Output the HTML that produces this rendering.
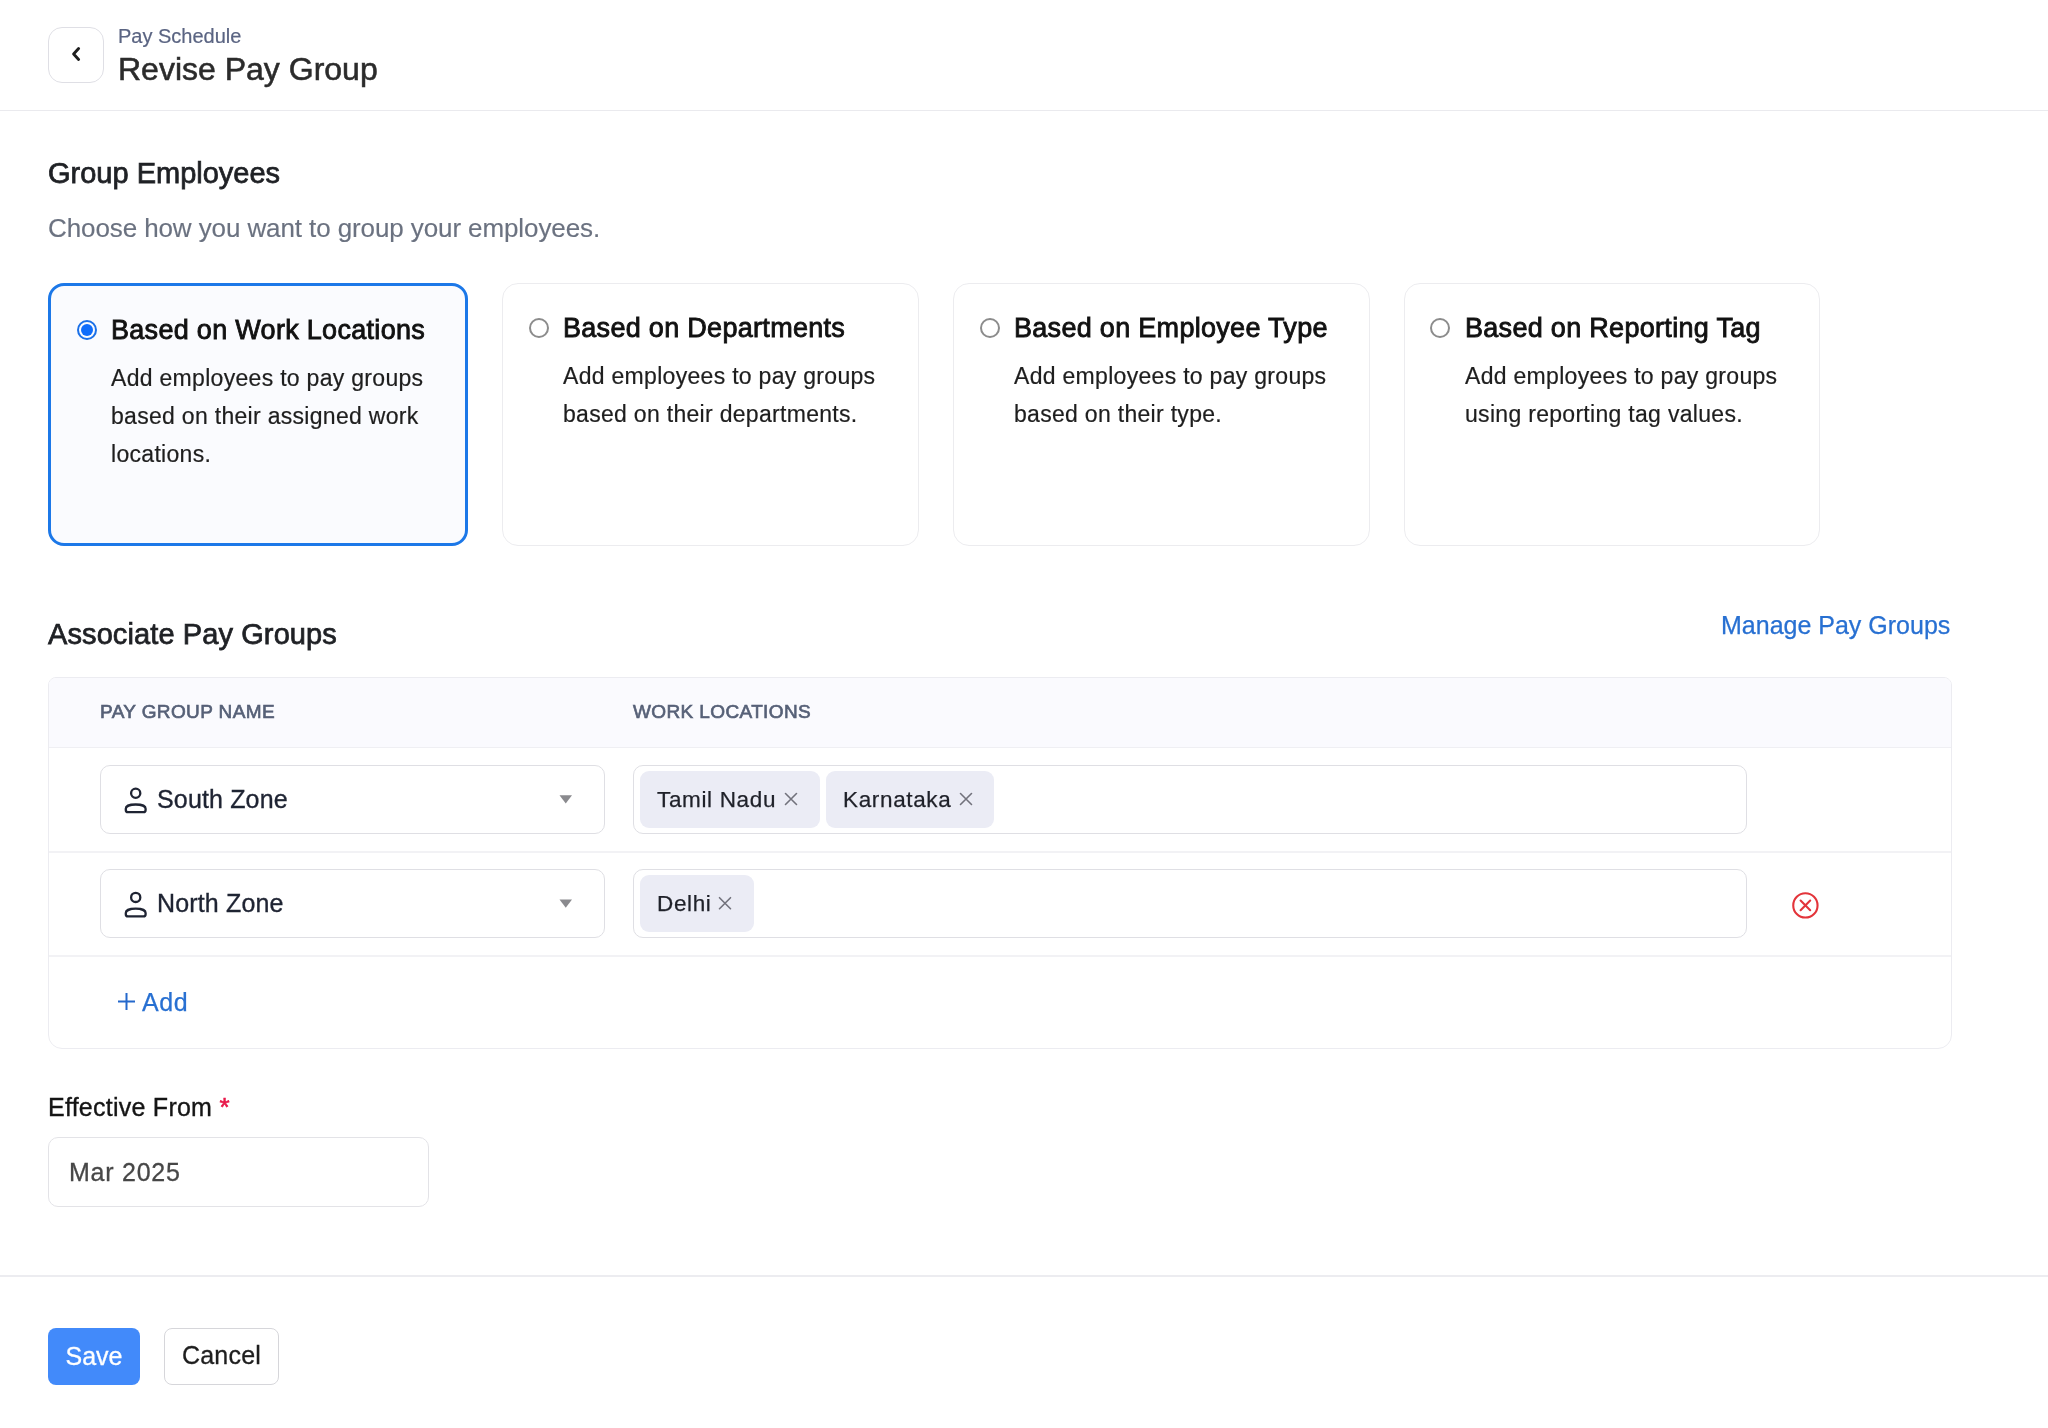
<!DOCTYPE html>
<html><head><meta charset="utf-8">
<style>
*{box-sizing:border-box;margin:0;padding:0}
html,body{width:2048px;height:1428px;overflow:hidden;background:#fff;font-family:"Liberation Sans",sans-serif;color:#222}
.abs{position:absolute}
.back{left:48px;top:27px;width:56px;height:56px;border:1.5px solid #dfdfe5;border-radius:14px;background:#fff}
.crumb{left:118px;top:25px;font-size:20px;color:#5a6482;white-space:nowrap;-webkit-text-stroke:0.2px #5a6482}
.title{left:118px;top:51px;font-size:32px;color:#2b2b2b;white-space:nowrap;-webkit-text-stroke:0.55px #2b2b2b}
.hline{left:0;top:109.5px;width:2048px;height:1.5px;background:#eaeaee}
.h2{font-size:29px;color:#1f2125;white-space:nowrap;-webkit-text-stroke:0.75px #1f2125}
.sub{left:48px;top:213px;font-size:26px;letter-spacing:-0.1px;color:#6b7280;white-space:nowrap;-webkit-text-stroke:0.15px #6b7280}
.card{top:283px;height:263px;border:1.5px solid #ececef;border-radius:16px;background:#fff}
.card.sel{border:3px solid #1c78e8;background:#fafbfe}
.radio{width:20px;height:20px;border:2px solid #8c8c8c;border-radius:50%}
.radio.on{border:2px solid #1a70e8}
.radio.on::after{content:"";position:absolute;left:2px;top:2px;width:12px;height:12px;border-radius:50%;background:#0f6dfb}
.ctitle{font-size:27px;letter-spacing:0.3px;color:#111;white-space:nowrap;-webkit-text-stroke:0.85px #111}
.cdesc{font-size:23px;line-height:38px;color:#1e1e1e;letter-spacing:0.3px;-webkit-text-stroke:0.2px #1e1e1e}

.link{color:#2870d2;-webkit-text-stroke:0.25px #2870d2}
.table{left:48px;top:677px;width:1904px;height:372px;border:1.5px solid #ececf1;border-radius:8px 8px 14px 14px;background:#fff;overflow:hidden}
.thead{left:0;top:0;width:100%;height:69.5px;background:#fafafe;border-bottom:1.5px solid #efeff3}
.th{font-size:19px;color:#566077;letter-spacing:0.38px;white-space:nowrap;-webkit-text-stroke:0.65px #566077}
.rowline{left:0;width:100%;height:1.5px;background:#f2f2f5}
.sel-box{width:505px;height:69px;border:1.5px solid #dfdfe4;border-radius:10px;background:#fff}
.sel-text{font-size:25px;color:#1f2433;white-space:nowrap;letter-spacing:0.15px;-webkit-text-stroke:0.35px #1f2433}
.tagbox{width:1114px;height:69px;border:1.5px solid #dfdfe4;border-radius:10px;background:#fff}
.tag{height:57px;background:#ebecf5;border-radius:9px}
.tagtext{font-size:22.5px;color:#1f2129;white-space:nowrap;letter-spacing:0.65px;-webkit-text-stroke:0.25px #1f2129}
.lbl{font-size:25px;color:#151515;white-space:nowrap;letter-spacing:0.25px;-webkit-text-stroke:0.35px #151515}
.ast{color:#e8194a;font-size:26px;-webkit-text-stroke:0.6px #e8194a}
.inp{left:48px;top:1137px;width:381px;height:70px;border:1.5px solid #e3e3e7;border-radius:10px;background:#fff}
.fline{left:0;top:1275px;width:2048px;height:2px;background:#ececf0}
.btn-save{left:48px;top:1328px;width:92px;height:57px;background:#428afa;border-radius:8px;color:#fff;font-size:25px;text-align:center;line-height:57px;-webkit-text-stroke:0.3px #fff}
.btn-cancel{left:164px;top:1328px;width:115px;height:57px;border:1.5px solid #d6d6da;border-radius:8px;color:#1e1e1e;font-size:25px;letter-spacing:0.2px;-webkit-text-stroke:0.3px #1e1e1e;text-align:center;line-height:52px;background:#fff}
</style></head><body><div id="root" style="position:absolute;left:0;top:0;width:2048px;height:1428px;will-change:transform">
<div class="abs back"><svg width="56" height="56" viewBox="0 0 56 56" style="position:absolute;left:-1.5px;top:-1.5px"><path d="M78.6 48.6 L73.6 54 L78.6 59.4" transform="translate(-48,-27)" fill="none" stroke="#1e1e1e" stroke-width="2.9" stroke-linecap="round" stroke-linejoin="round"/></svg></div>
<div class="abs crumb">Pay Schedule</div>
<div class="abs title">Revise Pay Group</div>
<div class="abs hline"></div>

<div class="abs h2" style="left:48px;top:157px">Group Employees</div>
<div class="abs sub">Choose how you want to group your employees.</div>

<div class="abs card sel" style="left:48px;width:420px"></div>
<div class="abs card" style="left:502px;width:417px"></div>
<div class="abs card" style="left:953px;width:417px"></div>
<div class="abs card" style="left:1404px;width:416px"></div>

<div class="abs radio on" style="left:77px;top:320px"></div>
<div class="abs ctitle" style="left:111px;top:315px">Based on Work Locations</div>
<div class="abs cdesc" style="left:111px;top:359px;width:340px">Add employees to pay groups based on their assigned work locations.</div>

<div class="abs radio" style="left:529px;top:318px"></div>
<div class="abs ctitle" style="left:563px;top:313px">Based on Departments</div>
<div class="abs cdesc" style="left:563px;top:357px;width:340px">Add employees to pay groups based on their departments.</div>

<div class="abs radio" style="left:980px;top:318px"></div>
<div class="abs ctitle" style="left:1014px;top:313px">Based on Employee Type</div>
<div class="abs cdesc" style="left:1014px;top:357px;width:340px">Add employees to pay groups based on their type.</div>

<div class="abs radio" style="left:1430px;top:318px"></div>
<div class="abs ctitle" style="left:1465px;top:313px">Based on Reporting Tag</div>
<div class="abs cdesc" style="left:1465px;top:357px;width:340px">Add employees to pay groups using reporting tag values.</div>


<div class="abs h2" style="left:48px;top:618px;letter-spacing:0.1px">Associate Pay Groups</div>
<div class="abs link" style="left:1721px;top:611px;font-size:25px;white-space:nowrap">Manage Pay Groups</div>

<div class="abs table">
  <div class="abs thead"></div>
  <div class="abs th" style="left:51px;top:23px">PAY GROUP NAME</div>
  <div class="abs th" style="left:584px;top:23px">WORK LOCATIONS</div>
  <div class="abs rowline" style="top:173px"></div>
  <div class="abs rowline" style="top:277px"></div>
</div>

<div class="abs sel-box" style="left:100px;top:765px"></div>

<div class="abs sel-text" style="left:157px;top:785px">South Zone</div>

<div class="abs tagbox" style="left:633px;top:765px"></div>
<div class="abs tag" style="left:640px;top:771px;width:180px"></div>
<div class="abs tagtext" style="left:657px;top:787px">Tamil Nadu</div>
<div class="abs tag" style="left:826px;top:771px;width:168px"></div>
<div class="abs tagtext" style="left:843px;top:787px">Karnataka</div>

<div class="abs sel-box" style="left:100px;top:869px"></div>
<div class="abs sel-text" style="left:157px;top:889px">North Zone</div>

<div class="abs tagbox" style="left:633px;top:869px"></div>
<div class="abs tag" style="left:640px;top:875px;width:114px"></div>
<div class="abs tagtext" style="left:657px;top:891px">Delhi</div>

<div class="abs link" style="left:142px;top:988px;font-size:25px;white-space:nowrap;letter-spacing:0.6px">Add</div>

<div class="abs lbl" style="left:48px;top:1092px">Effective From <span class="ast">*</span></div>
<div class="abs inp"></div>
<div class="abs" style="left:69px;top:1158px;font-size:25px;color:#474747;white-space:nowrap;letter-spacing:0.75px;-webkit-text-stroke:0.3px #474747">Mar 2025</div>

<div class="abs fline"></div>
<div class="abs btn-save">Save</div>
<div class="abs btn-cancel">Cancel</div>
<svg class="abs" style="left:0;top:0" width="2048" height="1428" viewBox="0 0 2048 1428">
  <g fill="none" stroke="#1f2433" stroke-width="2.3" stroke-linejoin="round">
    <circle cx="135.7" cy="793.2" r="4.6"/>
    <path d="M125.8 810 V808.8 C125.8 806.2 130 804.5 135.7 804.5 C141.4 804.5 145.6 806.2 145.6 808.8 V810 Q145.6 812.2 143.4 812.2 H128 Q125.8 812.2 125.8 810 Z"/>
    <circle cx="135.7" cy="897.4" r="4.6"/>
    <path d="M125.8 914.2 V913 C125.8 910.4 130 908.7 135.7 908.7 C141.4 908.7 145.6 910.4 145.6 913 V914.2 Q145.6 916.4 143.4 916.4 H128 Q125.8 916.4 125.8 914.2 Z"/>
  </g>
  <path d="M559.5 795.3 H572 L565.75 803.6 Z" fill="#8a8a8e"/>
  <path d="M559.5 899.5 H572 L565.75 907.8 Z" fill="#8a8a8e"/>
  <g stroke="#72727c" stroke-width="1.6" stroke-linecap="round">
    <path d="M785.5 793.5 L796.5 804.5 M796.5 793.5 L785.5 804.5"/>
    <path d="M960.5 793.5 L971.5 804.5 M971.5 793.5 L960.5 804.5"/>
    <path d="M719.5 897.7 L730.5 908.7 M730.5 897.7 L719.5 908.7"/>
  </g>
  <g fill="none" stroke="#e3343a" stroke-width="2.1" stroke-linecap="round">
    <circle cx="1805.4" cy="905.4" r="12.15"/>
    <path d="M1800.6 900.6 L1810.2 910.2 M1810.2 900.6 L1800.6 910.2"/>
  </g>
  <path d="M126.5 993 V1010 M118 1001.5 H135" stroke="#2468cc" stroke-width="2" fill="none"/>
</svg>
</div></body></html>
